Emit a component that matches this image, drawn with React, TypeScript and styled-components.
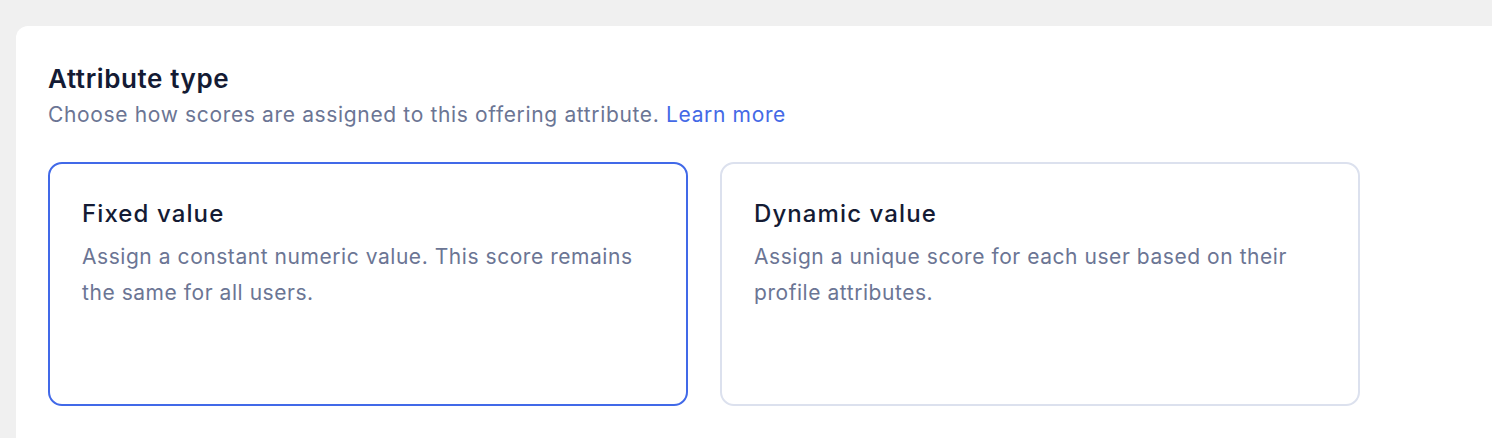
import React from "react";
import styled, { createGlobalStyle } from "styled-components";

const Global = createGlobalStyle`
  html, body { margin: 0; padding: 0; background: #f0f0f0; }
  body { font-family: Inter, "Noto Sans", sans-serif; -webkit-font-smoothing: antialiased; }
`;

const Page = styled.div`
  padding: 26px 0 0 16px;
  height: 438px;
  box-sizing: border-box;
  overflow: hidden;
`;

const Panel = styled.section`
  background: #ffffff;
  border-radius: 12px 0 0 0;
  padding: 36px 0 40px 32px;
  min-height: 420px;
  box-sizing: border-box;
`;

const Title = styled.h2`
  margin: 0;
  font-size: 26px;
  line-height: 34px;
  font-weight: 600;
  letter-spacing: 0.6px;
  color: #141b34;
`;

const Subtitle = styled.p`
  margin: 5px 0 0;
  font-size: 21px;
  line-height: 28px;
  letter-spacing: 0.65px;
  color: #6b7594;
`;

const Link = styled.a`
  color: #4469e6;
  text-decoration: none;
`;

const Options = styled.div`
  display: flex;
  gap: 32px;
  margin-top: 33px;
`;

const Card = styled.div<{ $selected?: boolean }>`
  width: 640px;
  height: 244px;
  box-sizing: border-box;
  border: 2px solid ${(p) => (p.$selected ? "#4169e8" : "#dce1ee")};
  border-radius: 14px;
  padding: 34px 32px;
  background: #fff;
  cursor: pointer;
`;

const CardTitle = styled.h3`
  margin: 0;
  font-size: 24px;
  line-height: 32px;
  font-weight: 450;
  letter-spacing: 1.1px;
  color: #141b34;
`;

const CardText = styled.p`
  margin: 9px 0 0;
  font-size: 21px;
  line-height: 36px;
  letter-spacing: 0.55px;
  color: #6b7594;
`;

export default function App() {
  return (
    <>
      <Global />
      <Page>
        <Panel>
          <Title>Attribute type</Title>
          <Subtitle>
            Choose how scores are assigned to this offering attribute.{" "}
            <Link href="#">Learn more</Link>
          </Subtitle>
          <Options>
            <Card $selected>
              <CardTitle>Fixed value</CardTitle>
              <CardText>
                Assign a constant numeric value. This score remains the same for all users.
              </CardText>
            </Card>
            <Card>
              <CardTitle>Dynamic value</CardTitle>
              <CardText>
                Assign a unique score for each user based on their profile attributes.
              </CardText>
            </Card>
          </Options>
        </Panel>
      </Page>
    </>
  );
}
